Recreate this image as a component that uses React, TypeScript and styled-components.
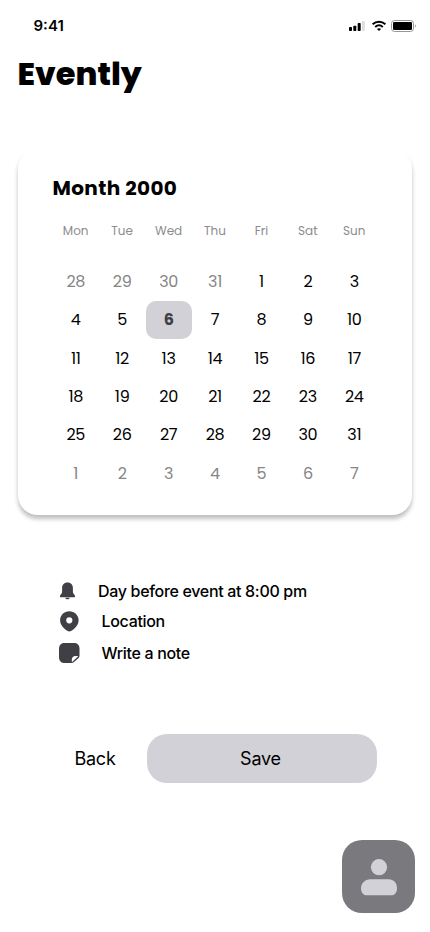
import React from 'react';
import styled, { createGlobalStyle } from 'styled-components';

const GlobalStyle = createGlobalStyle`
  * { box-sizing: border-box; }
  body { margin: 0; background: #fff; font-family: Inter, "Liberation Sans", sans-serif; color: #000; }
  button { border: 0; padding: 0; background: none; font: inherit; color: inherit; }
`;

const Screen = styled.main`
  width: 430px;
  height: 932px;
  display: flex;
  flex-direction: column;
  background: #fff;
  overflow: hidden;
`;

const StatusBar = styled.header`
  height: 52px;
  padding: 0 14px 0 33.5px;
  display: flex;
  align-items: center;
  justify-content: space-between;
`;

const Clock = styled.span`
  padding-bottom: 2px;
  font-size: 15px;
  font-weight: 600;
`;

const Brand = styled.h1`
  margin: 0 0 0 17.5px;
  height: 97px;
  font-family: Poppins, Inter, sans-serif;
  font-size: 32px;
  line-height: 44px;
  font-weight: 800;
`;

const Card = styled.section`
  width: 394px;
  height: 366px;
  margin-left: 18px;
  padding: 26px 34.5px 0;
  flex: none;
  border-radius: 20px;
  background: #fff;
  box-shadow: 0 4px 4px rgba(0, 0, 0, 0.25);
`;

const MonthTitle = styled.h2`
  margin: 0;
  font-family: Poppins, Inter, sans-serif;
  font-size: 20px;
  line-height: 26px;
  font-weight: 700;
  letter-spacing: 0.38px;
`;

const Grid = styled.div`
  display: grid;
  grid-template-columns: repeat(7, 1fr);
`;

const Weekdays = styled(Grid)`
  height: 20px;
  margin: 20px 0 21.6px;
`;

const Weekday = styled.span`
  font-family: Poppins, Inter, sans-serif;
  font-size: 12px;
  line-height: 20px;
  text-align: center;
  color: #8c8c8e;
`;

const Days = styled(Grid)`
  grid-auto-rows: 38.3px;
`;

const Day = styled.button<{ $outside?: boolean; $selected?: boolean }>`
  width: 46px;
  height: 38px;
  justify-self: center;
  font-family: Poppins, Inter, sans-serif;
  font-size: 16px;
  font-weight: ${(p) => (p.$selected ? 700 : 400)};
  letter-spacing: -0.32px;
  text-align: center;
  border-radius: 10px;
  color: ${(p) => (p.$selected ? '#3f3f45' : p.$outside ? '#868686' : '#000')};
  background: ${(p) => (p.$selected ? '#d2d1d7' : 'transparent')};
`;

const Details = styled.ul`
  list-style: none;
  margin: 61px 0 0;
  padding: 0 0 0 58px;
  display: grid;
  grid-template-rows: 30px 30px 33px;
`;

const Detail = styled.li<{ $gap: number }>`
  display: flex;
  align-items: center;
  gap: ${(p) => p.$gap}px;
  font-size: 16px;
  font-weight: 500;
  letter-spacing: -0.32px;
  svg { flex: none; }
`;

const Actions = styled.div`
  display: flex;
  margin: 65px 0 0 44px;
  height: 49px;
  flex: none;
`;

const BackButton = styled.button`
  width: 103px;
  padding-right: 1px;
  font-size: 18px;
  letter-spacing: -0.2px;
`;

const SaveButton = styled.button`
  width: 230px;
  border-radius: 20px;
  background: #d2d1d7;
  font-size: 18px;
  letter-spacing: -0.2px;
  padding-right: 3px;
`;

const ProfileButton = styled.button`
  width: 73px;
  height: 73px;
  margin: 57px 0 0 342px;
  flex: none;
  border-radius: 20px;
  background: #7a797e;
  display: flex;
  justify-content: center;
  align-items: center;
`;

const weekdays = ['Mon', 'Tue', 'Wed', 'Thu', 'Fri', 'Sat', 'Sun'];
const days = [
  ...[28, 29, 30, 31].map((n) => ({ n, outside: true })),
  ...Array.from({ length: 31 }, (_, i) => ({ n: i + 1, outside: false })),
  ...Array.from({ length: 7 }, (_, i) => ({ n: i + 1, outside: true })),
];

const StatusIcons = () => (
  <svg width="68" height="16" viewBox="0 0 68 16">
    <rect x="1" y="9" width="3" height="4" rx=".8" />
    <rect x="5.3" y="7.7" width="3" height="5.3" rx=".8" />
    <rect x="9.7" y="5" width="3" height="8" rx=".8" />
    <rect x="14" y="3" width="2.8" height="10" rx=".8" fill="#dedede" />
    <g fill="none" stroke="#000" strokeWidth="2">
      <path d="M24.6 6.3C28.4 2.9 33.6 2.9 37.4 6.3" />
      <path d="M27.2 9C29.5 6.9 32.5 6.9 34.8 9" />
    </g>
    <path d="M31 13.1L28.9 11C30.1 9.9 31.9 9.9 33.1 11Z" />
    <rect x="43.5" y="2.5" width="22" height="11" rx="3" fill="none" stroke="#979797" />
    <rect x="45" y="4" width="19" height="8" rx="1.2" />
    <path d="M67 6.2c1.1.6 1.1 3 0 3.6z" fill="#979797" />
  </svg>
);

const BellIcon = () => (
  <svg width="20" height="22" viewBox="0 0 20 22" fill="#3f3f45">
    <path d="M9.5 2.6C5.8 2.6 4.1 5.2 4.1 8.3V12c0 2-2.2 2.8-2.2 4.2 0 .7.5 1 1.2 1h12.8c.7 0 1.2-.3 1.2-1 0-1.4-2.2-2.2-2.2-4.2V8.3c0-3.1-1.7-5.7-5.4-5.7Z" />
    <path d="M7.2 17.7h4.6c-.4 1-1.2 1.5-2.3 1.5s-1.9-.5-2.3-1.5Z" />
  </svg>
);

const PinIcon = () => (
  <svg width="22" height="22" viewBox="0 0 22 22" fill="#3f3f45">
    <path fillRule="evenodd" d="M11.3 1.2C6.2 1.2 2.1 5.2 2.1 10.1c0 5.2 4.2 9.2 7.6 11 1.1.5 2.3.5 3.3 0 3.5-1.8 7.6-5.8 7.6-11 0-4.9-4.2-8.9-9.3-8.9Zm0 6a3.1 3.1 0 1 1 0 6.2 3.1 3.1 0 0 1 0-6.2Z" />
  </svg>
);

const NoteIcon = () => (
  <svg width="22" height="22" viewBox="0 0 22 22" fill="#3f3f45">
    <path d="M6.8 1h9C19.3 1 21.5 3 21.5 6.8v6.7c0 1.2-.4 2-1.2 2.8L16 20.1c-.7.6-1.5.9-2.5.9H6.8C3.3 21 1 19 1 15.2V6.8C1 3 3.3 1 6.8 1Z" />
    <path d="M13.8 19.6v-1.9c0-2.4 1.4-3.8 3.8-3.8h2.2c.2 0 .3.3.1.5l-5.5 5.4c-.2.2-.6.1-.6-.2Z" fill="#fff" />
  </svg>
);

const PersonIcon = () => (
  <svg width="38" height="38" viewBox="0 0 38 38" fill="#d2d1d7">
    <circle cx="19" cy="9.2" r="8.1" />
    <path d="M10.3 21.3h18.4c5 0 8.3 3.6 8.3 9.1 0 4-2.5 6.9-6 6.9H7c-3.5 0-6-2.9-6-6.9 0-5.1 4-9.1 9.3-9.1Z" />
  </svg>
);

export default function App() {
  return (
    <Screen>
      <GlobalStyle />
      <StatusBar><Clock>9:41</Clock><StatusIcons /></StatusBar>
      <Brand>Evently</Brand>
      <Card>
        <MonthTitle>Month 2000</MonthTitle>
        <Weekdays>{weekdays.map((d) => <Weekday key={d}>{d}</Weekday>)}</Weekdays>
        <Days>
          {days.map((d, i) => (
            <Day key={i} $outside={d.outside} $selected={!d.outside && d.n === 6}>{d.n}</Day>
          ))}
        </Days>
      </Card>
      <Details>
        <Detail $gap={20}><BellIcon />Day before event at 8:00 pm</Detail>
        <Detail $gap={21.5}><PinIcon />Location</Detail>
        <Detail $gap={21.5}><NoteIcon />Write a note</Detail>
      </Details>
      <Actions>
        <BackButton>Back</BackButton>
        <SaveButton>Save</SaveButton>
      </Actions>
      <ProfileButton aria-label="Profile"><PersonIcon /></ProfileButton>
    </Screen>
  );
}
